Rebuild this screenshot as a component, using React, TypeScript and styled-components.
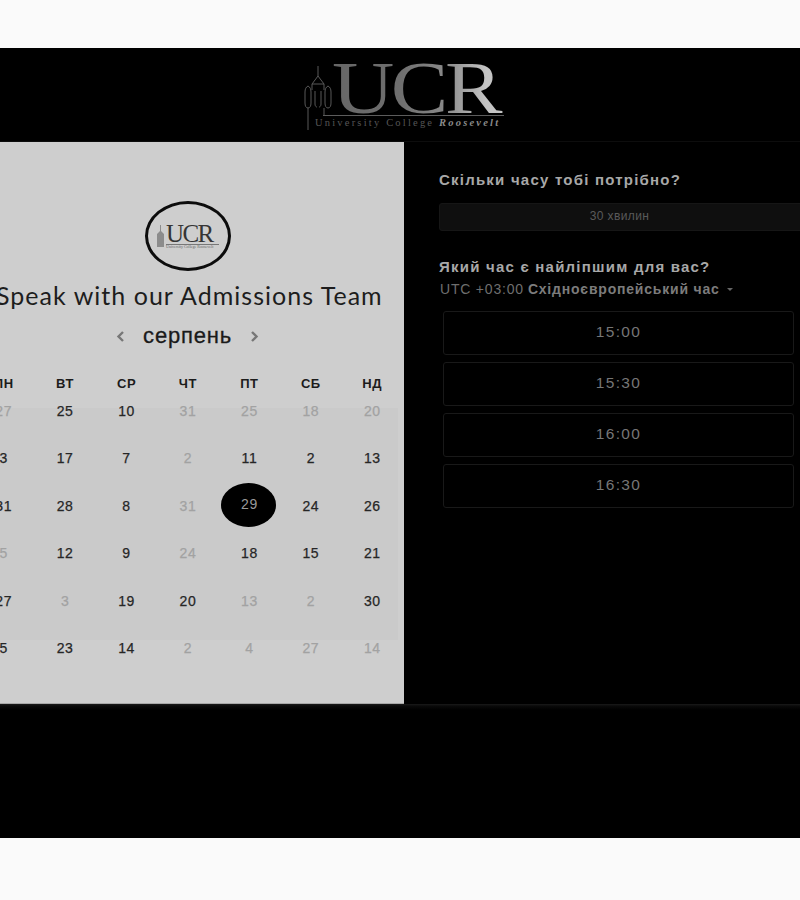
import React from 'react';
import styled, { createGlobalStyle } from 'styled-components';

const GlobalStyle = createGlobalStyle`
  html, body {
    margin: 0;
    padding: 0;
    background: #fafafa;
    overflow: hidden;
  }
  body {
    font-family: 'Liberation Sans', Arial, sans-serif;
  }
`;

const Page = styled.div`
  width: 800px;
  height: 900px;
  padding: 48px 0 62px;
  box-sizing: border-box;
`;

const Frame = styled.div`
  height: 790px;
  background: #000;
  display: flex;
  flex-direction: column;
  overflow: hidden;
`;

const Header = styled.header`
  height: 94px;
  flex: none;
  display: flex;
  justify-content: center;
  box-sizing: border-box;
  padding: 13px 0 0 8px;
  border-bottom: 1px solid #0d0d0d;
`;

const Logo = styled.div`
  display: flex;
  align-items: flex-start;
  gap: 0;
`;

const LogoText = styled.div`
  display: flex;
  flex-direction: column;
  width: 172px;
`;

const LogoLetters = styled.div`
  font-family: 'Liberation Serif', serif;
  font-size: 75px;
  line-height: 54px;
  height: 54px;
  letter-spacing: -3px;
  transform: scaleX(1.15);
  transform-origin: left center;
  white-space: nowrap;
  background: linear-gradient(90deg, #666 0%, #6f6f6f 35%, #8a8a8a 58%, #c4c4c4 78%);
  -webkit-background-clip: text;
  background-clip: text;
  color: transparent;
`;

const LogoLine = styled.div`
  border-top: 1px solid #5c5c5c;
  margin-left: -9px;
`;

const LogoTag = styled.div`
  font-family: 'Liberation Serif', serif;
  font-size: 10.5px;
  line-height: 14px;
  letter-spacing: 2.2px;
  color: #565656;
  white-space: nowrap;
  margin-left: -17px;

  em {
    font-weight: 700;
    color: #8a8a8a;
    letter-spacing: 2.2px;
  }
`;

const Body = styled.div`
  height: 562px;
  flex: none;
  display: flex;
`;

const LeftPanel = styled.section`
  width: 404px;
  flex: none;
  background: linear-gradient(#cacaca, #cacaca) no-repeat 0 266px / 398px 232px, #cecece;
  display: flex;
  flex-direction: column;
  overflow: hidden;
  padding-top: 59px;
  box-sizing: border-box;
  border-bottom: 1px solid #a8a8a8;
`;

const Badge = styled.div`
  width: 80px;
  height: 64px;
  border: 3px solid #0c0c0c;
  border-radius: 50%;
  box-sizing: content-box;
  align-self: center;
  margin-left: -29px;
  display: flex;
  align-items: center;
  justify-content: center;
`;

const BadgeColumn = styled.div`
  display: flex;
  flex-direction: column;
  align-items: flex-start;
  width: 53px;
`;

const BadgeLetters = styled.div`
  font-family: 'Liberation Serif', serif;
  font-size: 25px;
  line-height: 20px;
  letter-spacing: -1.6px;
  color: #353535;
  white-space: nowrap;
`;

const BadgeTag = styled.div`
  font-family: 'Liberation Serif', serif;
  font-size: 4px;
  line-height: 4px;
  white-space: nowrap;
  color: #666;
  border-top: 1px solid #777;
  width: 100%;
`;

const Title = styled.h1`
  margin: 9px 0 0 -4px;
  font-family: Lato, 'Open Sans', sans-serif;
  font-size: 25px;
  font-weight: 400;
  line-height: 30px;
  letter-spacing: 1.02px;
  color: #1d1d1d;
  white-space: nowrap;
  text-align: left;
`;

const MonthBar = styled.div`
  margin: 11px 0 0 -29px;
  height: 30px;
  display: flex;
  align-items: center;
  justify-content: center;
  gap: 18px;
`;

const MonthName = styled.div`
  font-size: 22px;
  line-height: 30px;
  letter-spacing: 0.8px;
  color: #1a1a1a;
  -webkit-text-stroke: 0.3px #1a1a1a;
`;

const Arrow = styled.svg`
  width: 9px;
  height: 11px;
  fill: none;
  stroke: #777;
  stroke-width: 2.4;
`;

const Calendar = styled.div`
  margin: 19px 0 0 -27px;
  width: 430px;
  display: grid;
  grid-template-columns: repeat(7, 1fr);
`;

const WeekDay = styled.div`
  height: 32px;
  line-height: 28px;
  text-align: center;
  font-size: 13px;
  font-weight: 700;
  letter-spacing: 0.6px;
  color: #1c1c1c;
`;

const Day = styled.div<{ $muted?: boolean; $selected?: boolean }>`
  height: 47.4px;
  display: flex;
  justify-content: center;
  align-items: flex-start;
  position: relative;
  font-size: 14px;
  line-height: 18px;
  letter-spacing: 0.6px;
  -webkit-text-stroke: ${(p) => (p.$selected ? '0' : '0.25px')};
  color: ${(p) => (p.$selected ? '#9a9a9a' : p.$muted ? '#a2a2a2' : '#262626')};
`;

const DayNumber = styled.span<{ $selected?: boolean }>`
  position: relative;
  top: ${(p) => (p.$selected ? '-2px' : '0')};
`;

const SelectedMark = styled.span`
  position: absolute;
  left: 50%;
  top: -14px;
  width: 55px;
  height: 44px;
  margin-left: -28px;
  border-radius: 50%;
  background: #000;
`;

const RightPanel = styled.section`
  flex: 1;
  min-width: 0;
  padding: 28px 0 0 35px;
  box-sizing: border-box;
  overflow: hidden;
`;

const Question = styled.h2`
  margin: 0;
  font-size: 15px;
  font-weight: 700;
  line-height: 20px;
  letter-spacing: 1.22px;
  color: #a8a8a8;
  white-space: nowrap;
`;

const Duration = styled.div`
  margin: 13px -30px 0 0;
  height: 28px;
  box-sizing: border-box;
  display: flex;
  align-items: center;
  justify-content: center;
  padding: 0 30px 2px 0;
  background: #0f0f0f;
  border: 1px solid #161616;
  border-radius: 3px;
  font-size: 12px;
  letter-spacing: 0.4px;
  color: #5a5a5a;
`;

const SecondQuestion = styled(Question)`
  margin-top: 26px;
`;

const Zone = styled.div`
  margin: 3px 0 0 1px;
  display: flex;
  align-items: center;
  height: 18px;
  font-size: 14px;
  letter-spacing: 0.8px;
  color: #6e6e6e;
  white-space: nowrap;

  strong {
    margin-left: 4px;
    color: #7c7c7c;
  }
`;

const Caret = styled.span`
  margin-left: 7px;
  border-left: 3.5px solid transparent;
  border-right: 3.5px solid transparent;
  border-top: 3px solid #666;
`;

const Slots = styled.div`
  margin: 13px 6px 0 4px;
  display: flex;
  flex-direction: column;
  gap: 7px;
`;

const Slot = styled.div`
  height: 44px;
  box-sizing: border-box;
  display: flex;
  align-items: center;
  justify-content: center;
  padding-bottom: 2px;
  border: 1px solid #191919;
  border-radius: 3px;
  font-size: 15.5px;
  letter-spacing: 1.3px;
  color: #767676;
`;

const Footer = styled.footer`
  flex: 1;
  background: linear-gradient(#1a1a1a, #0a0a0a 2px, #000 6px);
`;

const Tower = styled.svg`
  width: 28px;
  height: 72px;
  flex: none;
  fill: none;
  stroke: #585858;
  stroke-width: 1;
`;

const SmallTower = styled.svg`
  width: 9px;
  height: 22px;
  flex: none;
  margin-right: 1px;
  fill: #8c8c8c;
`;

const weekDays = ['ПН', 'ВТ', 'СР', 'ЧТ', 'ПТ', 'СБ', 'НД'];

// m = muted day, s = selected day
const days: [string, string?][] = [
  ['27', 'm'], ['25'], ['10'], ['31', 'm'], ['25', 'm'], ['18', 'm'], ['20', 'm'],
  ['3'], ['17'], ['7'], ['2', 'm'], ['11'], ['2'], ['13'],
  ['31'], ['28'], ['8'], ['31', 'm'], ['29', 's'], ['24'], ['26'],
  ['5', 'm'], ['12'], ['9'], ['24', 'm'], ['18'], ['15'], ['21'],
  ['27'], ['3', 'm'], ['19'], ['20'], ['13', 'm'], ['2', 'm'], ['30'],
  ['5'], ['23'], ['14'], ['2', 'm'], ['4', 'm'], ['27', 'm'], ['14', 'm'],
];

const slots = ['15:00', '15:30', '16:00', '16:30'];

const App: React.FC = () => (
  <Page>
    <GlobalStyle />
    <Frame>
      <Header>
        <Logo>
          <Tower viewBox="0 0 28 72">
            <path d="M14 5v10M14 15l-6 8v6M14 15l6 8v6M8 23h12" />
            <path d="M4 25c-2 1-3 3-3 6v11c0 3 1 5 3 5s3-2 3-5V31c0-3-1-5-3-6zM24 25c2 1 3 3 3 6v11c0 3-1 5-3 5s-3-2-3-5V31c0-3 1-5 3-6z" />
            <path d="M11 30v13c0 2 1 3 2 3M17 30v13c0 2-1 3-2 3M20 47v7M4 47v22" />
          </Tower>
          <LogoText>
            <LogoLetters>UCR</LogoLetters>
            <LogoLine />
            <LogoTag>
              University College <em>Roosevelt</em>
            </LogoTag>
          </LogoText>
        </Logo>
      </Header>
      <Body>
        <LeftPanel>
          <Badge>
            <SmallTower viewBox="0 0 9 22">
              <path d="M4 0h1v6l3 3v13H1V9l3-3z" />
            </SmallTower>
            <BadgeColumn>
              <BadgeLetters>UCR</BadgeLetters>
              <BadgeTag>University College Roosevelt</BadgeTag>
            </BadgeColumn>
          </Badge>
          <Title>Speak with our Admissions Team</Title>
          <MonthBar>
            <Arrow viewBox="0 0 9 11">
              <path d="M7 1L2.5 5.5 7 10" />
            </Arrow>
            <MonthName>серпень</MonthName>
            <Arrow viewBox="0 0 9 11">
              <path d="M2 1l4.5 4.5L2 10" />
            </Arrow>
          </MonthBar>
          <Calendar>
            {weekDays.map((d) => (
              <WeekDay key={d}>{d}</WeekDay>
            ))}
            {days.map(([n, kind], i) => (
              <Day key={i} $muted={kind === 'm'} $selected={kind === 's'}>
                {kind === 's' && <SelectedMark />}
                <DayNumber $selected={kind === 's'}>{n}</DayNumber>
              </Day>
            ))}
          </Calendar>
        </LeftPanel>
        <RightPanel>
          <Question>Скільки часу тобі потрібно?</Question>
          <Duration>30 хвилин</Duration>
          <SecondQuestion>Який час є найліпшим для вас?</SecondQuestion>
          <Zone>
            UTC +03:00 <strong>Східноєвропейський час</strong>
            <Caret />
          </Zone>
          <Slots>
            {slots.map((s) => (
              <Slot key={s}>{s}</Slot>
            ))}
          </Slots>
        </RightPanel>
      </Body>
      <Footer />
    </Frame>
  </Page>
);

export default App;
